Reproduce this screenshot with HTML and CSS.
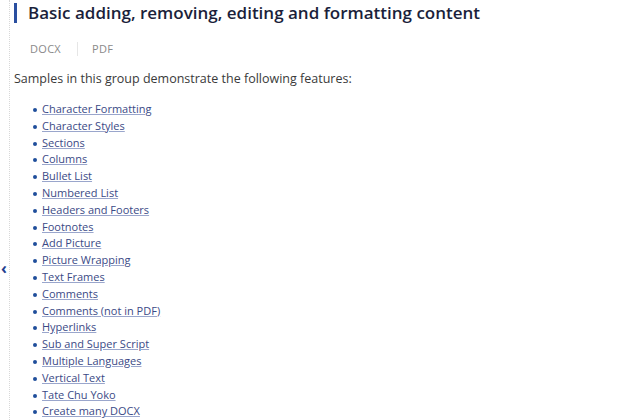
FILE: index.html
```html
<!DOCTYPE html>
<html>
<head>
<meta charset="utf-8">
<link rel="stylesheet" href="styles.css">
</head>
<body>
<div class="page">
  <div class="rail">
    <span class="chev">&#8249;</span>
  </div>
  <main class="content">
    <h1 class="title">Basic adding, removing, editing and formatting content</h1>
    <div class="tabs">
      <span class="tab">DOCX</span>
      <span class="sep"></span>
      <span class="tab">PDF</span>
    </div>
    <p class="intro">Samples in this group demonstrate the following features:</p>
    <ul class="list">
      <li><a href="#">Character Formatting</a></li>
      <li><a href="#">Character Styles</a></li>
      <li><a href="#">Sections</a></li>
      <li><a href="#">Columns</a></li>
      <li><a href="#">Bullet List</a></li>
      <li><a href="#">Numbered List</a></li>
      <li><a href="#">Headers and Footers</a></li>
      <li><a href="#">Footnotes</a></li>
      <li><a href="#">Add Picture</a></li>
      <li><a href="#">Picture Wrapping</a></li>
      <li><a href="#">Text Frames</a></li>
      <li><a href="#">Comments</a></li>
      <li><a href="#">Comments (not in PDF)</a></li>
      <li><a href="#">Hyperlinks</a></li>
      <li><a href="#">Sub and Super Script</a></li>
      <li><a href="#">Multiple Languages</a></li>
      <li><a href="#">Vertical Text</a></li>
      <li><a href="#">Tate Chu Yoko</a></li>
      <li><a href="#">Create many DOCX</a></li>
    </ul>
  </main>
</div>
</body>
</html>
```
FILE: styles.css
```css
html, body {
  margin: 0;
  padding: 0;
  background: #fff;
  overflow: hidden;
}
body {
  font-family: "Open Sans", "DejaVu Sans", sans-serif;
}
.page {
  display: flex;
  height: 420px;
}
.rail {
  width: 9px;
  border-right: 1px dotted #d8d8d8;
  position: relative;
}
.chev {
  position: absolute;
  left: 1px;
  top: 260px;
  font-size: 16px;
  font-weight: 700;
  color: #1f3f8f;
  line-height: 16px;
}
.content {
  padding-left: 4px;
}
.title {
  margin: 3px 0 0 0;
  padding-left: 11px;
  border-left: 3px solid #2a4fa0;
  font-size: 17px;
  line-height: 20px;
  font-weight: 600;
  color: #1b1f3b;
}
.tabs {
  display: flex;
  align-items: center;
  margin: 19px 0 0 16px;
  height: 14px;
}
.tab {
  font-size: 11px;
  color: #8a8a8a;
  line-height: 14px;
  letter-spacing: 0.3px;
}
.sep {
  width: 1px;
  height: 14px;
  background: #e6e6e6;
  margin: 0 14px 0 16px;
}
.intro {
  margin: 15px 0 0 0;
  font-size: 12.5px;
  line-height: 16px;
  color: #3a3a3a;
}
.list {
  margin: 14px 0 0 0;
  padding-left: 28px;
  list-style: none;
}
.list li {
  position: relative;
  font-size: 11px;
  line-height: 16.8px;
}
.list li::before {
  content: "";
  position: absolute;
  left: -9px;
  top: 7px;
  width: 4px;
  height: 4px;
  border-radius: 50%;
  background: #1f4e9b;
}
.list a {
  color: #3b4a86;
  text-decoration: underline;
  text-decoration-color: #9aa6cc;
}
```
